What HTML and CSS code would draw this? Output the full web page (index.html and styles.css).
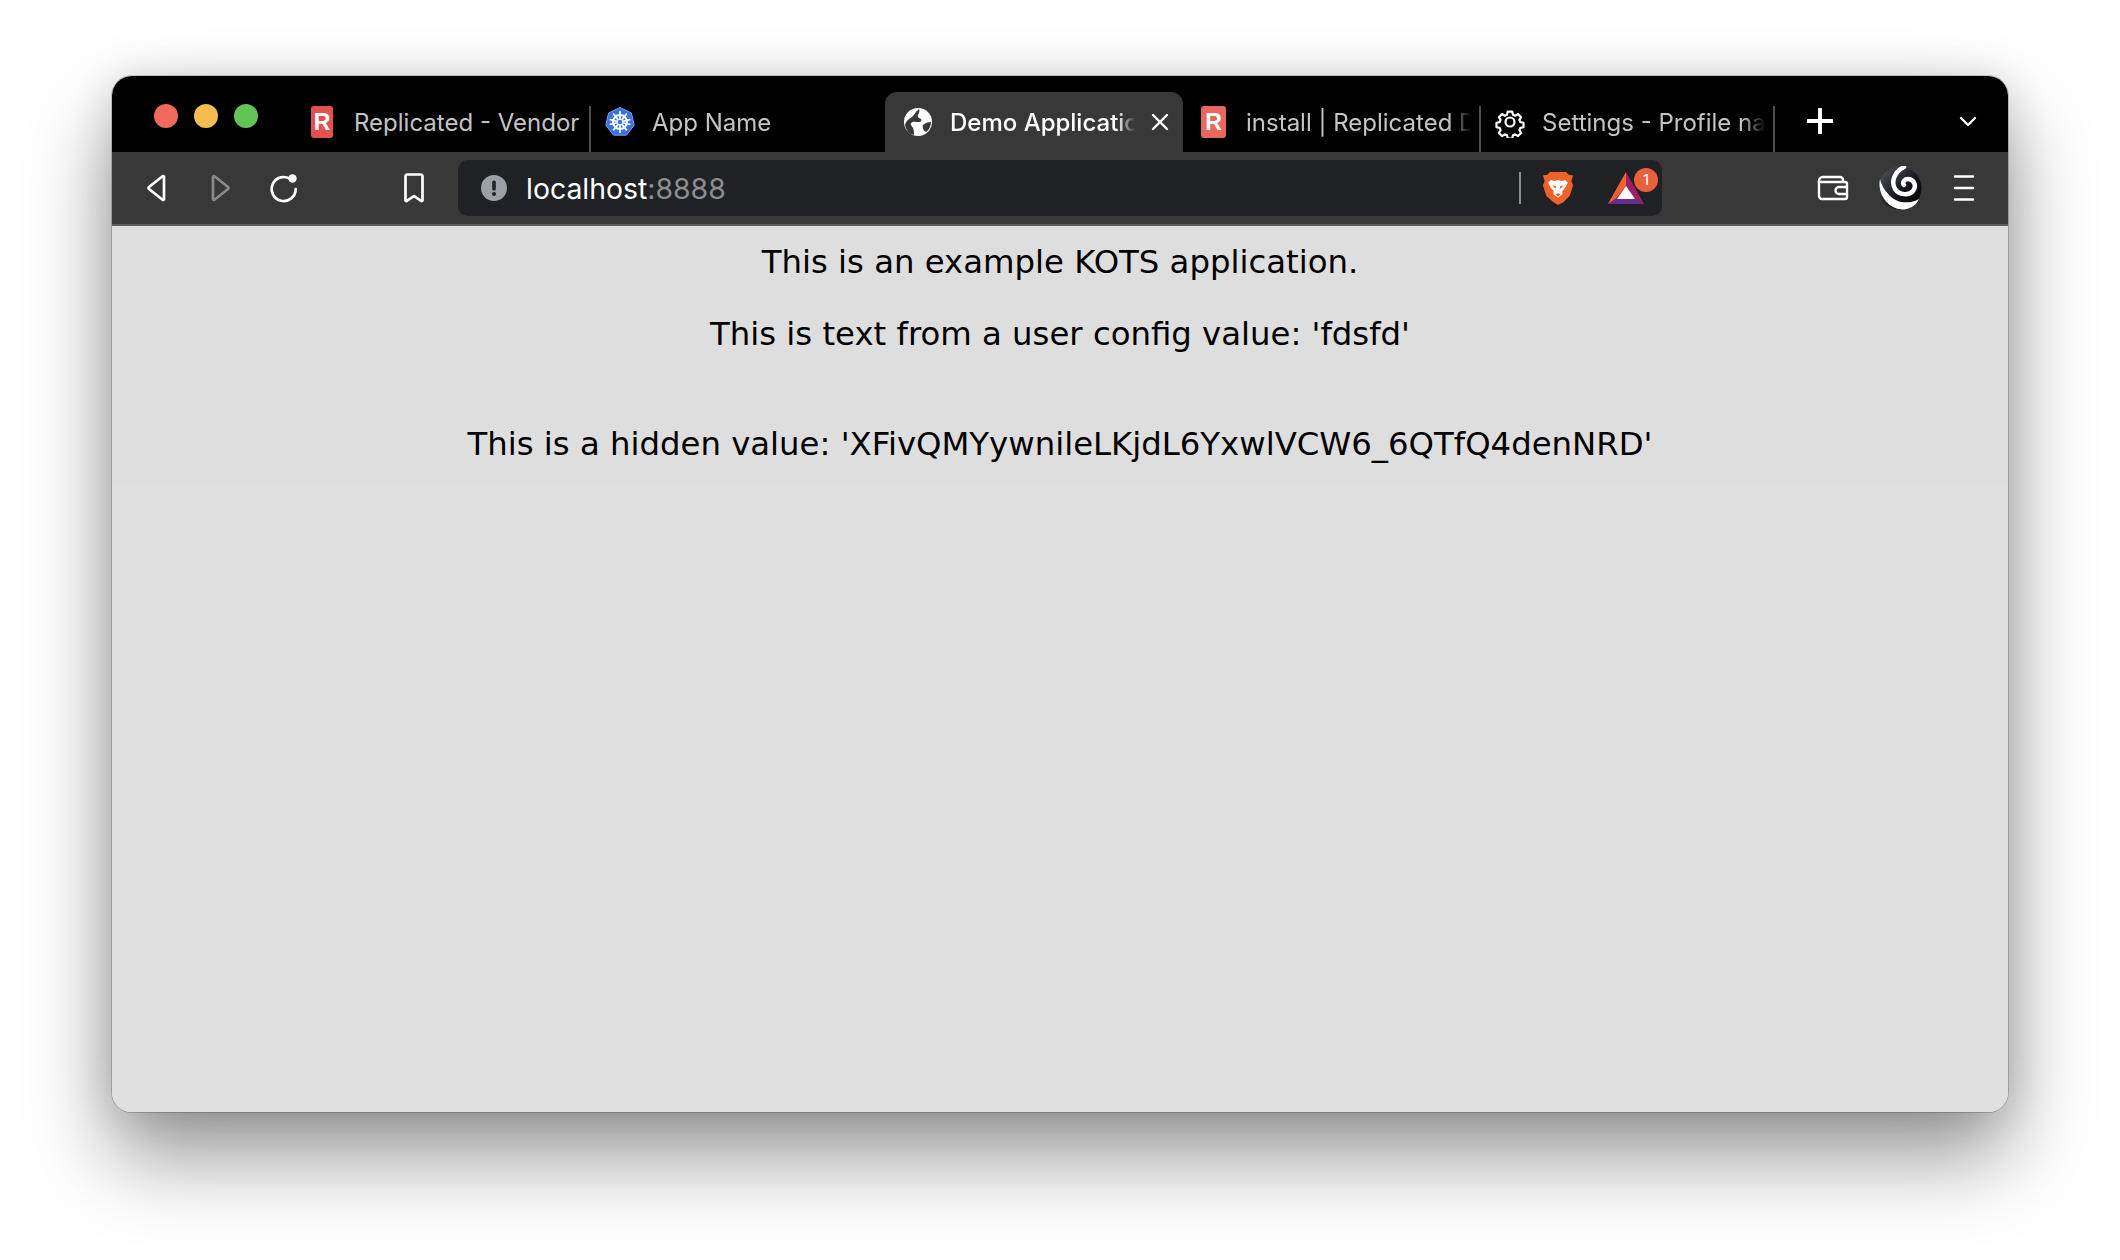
FILE: index.html
```html
<!DOCTYPE html>
<html lang="en">
<head>
	<meta charset="utf-8">
	<title>Demo Application</title>
	<link rel="stylesheet" href="styles.css">
</head>
<body>
	<div class="window">
		<div class="tabstrip">
			<div class="traffic">
				<span class="light red"></span>
				<span class="light yellow"></span>
				<span class="light green"></span>
			</div>
			<div class="tab">
				<span class="r-icon r-icon-dark">R</span>
				<span class="tab-title tab-title-full">Replicated - Vendor</span>
			</div>
			<div class="tab tab-sep">
				<svg class="fav" viewBox="0 0 32 32">
					<path d="M16 1.5l11.4 5.5 2.8 12.3-7.9 9.9H9.7L1.8 19.3 4.6 7z" fill="#3970e4" stroke="#7ea0ec" stroke-width="1"/>
					<g fill="none" stroke="#fff">
						<circle cx="16" cy="16" r="7" stroke-width="2"/>
						<path d="M16 5v22M5.5 13.5l21 5M26.5 13.5l-21 5M9.2 7.6l13.6 16.8M22.8 7.6L9.2 24.400" stroke-width="1.7"/>
					</g>
					<circle cx="16" cy="16" r="2.200" fill="#3970e4"/>
				</svg>
				<span class="tab-title">App Name</span>
			</div>
			<div class="tab tab-active">
				<svg class="fav" viewBox="0 0 32 32">
					<circle cx="16" cy="16" r="14" fill="#fff"/>
					<path d="M3 19c1-5 5-6 8-9 2-2 3-5 6-7 1 2 0 4-1 6-1 2 1 3 3 4 1 1 0 3-2 3-3 0-6-1-8 1-1 2 1 3 2 5 1 2 1 4 1 7-4-1-7-2-9-10zM21 19c2-2 5-3 8-3 0 4-2 8-5 10-2-1-4-4-3-7z" fill="#383838"/>
				</svg>
				<span class="tab-title">Demo Application</span>
				<svg class="close" viewBox="0 0 18 18"><path d="M2 2l14 14M16 2L2 16" stroke="#fff" stroke-width="2.400" stroke-linecap="round"/></svg>
			</div>
			<div class="tab">
				<span class="r-icon">R</span>
				<span class="tab-title">install | Replicated Docs</span>
			</div>
			<div class="tab tab-sep tab-end">
				<svg class="fav" viewBox="0 0 32 32">
					<path d="M13.200 3h5.600l.9 4 2.800 1.200 3.500-2.200 3.900 4-2.200 3.400 1.200 2.800 4 .8v5.600l-4 .8-1.200 2.800 2.200 3.500-3.900 3.900-3.500-2.200-2.800 1.200-.9 4h-5.600l-.9-4-2.800-1.200-3.500 2.200-3.900-3.900 2.200-3.500-1.200-2.800-4-.8v-5.600l4-.8 1.200-2.800-2.200-3.400 3.900-4 3.500 2.200 2.800-1.200z" transform="translate(3.200 3.200) scale(.8)" fill="none" stroke="#fff" stroke-width="2.700" stroke-linejoin="round"/>
					<circle cx="16" cy="16" r="4.500" fill="none" stroke="#fff" stroke-width="2.200"/>
				</svg>
				<span class="tab-title">Settings - Profile name</span>
			</div>
			<svg class="plus" viewBox="0 0 24 24"><path d="M12 1v22M1 12h22" stroke="#fff" stroke-width="3.600" stroke-linecap="round"/></svg>
			<svg class="chevron" viewBox="0 0 18 12"><path d="M2 2l7 7 7-7" fill="none" stroke="#fff" stroke-width="2.400" stroke-linecap="round" stroke-linejoin="round"/></svg>
		</div>

		<div class="toolbar">
			<svg class="btn" viewBox="0 0 40 40"><path d="M28 9v22a.9.900 0 0 1-1.500.700L13 21a1.300 1.300 0 0 1 0-2L26.500 8.300A.9.900 0 0 1 28 9z" transform="translate(-1 0)" fill="none" stroke="#fff" stroke-width="2.700" stroke-linejoin="round"/></svg>
			<svg class="btn" viewBox="0 0 40 40"><path d="M13 9v22a.9.900 0 0 0 1.500.700L28 21a1.300 1.300 0 0 0 0-2L14.500 8.300A.9.900 0 0 0 13 9z" fill="none" stroke="#8a8a8a" stroke-width="2.700" stroke-linejoin="round"/></svg>
			<svg class="btn btn-reload" viewBox="0 0 40 40"><path d="M27 11.500A12 12 0 1 0 31.700 21" fill="none" stroke="#fff" stroke-width="2.700" stroke-linecap="round"/><circle cx="28.500" cy="10.500" r="4.200" fill="#fff"/></svg>
			<svg class="btn btn-mark" viewBox="0 0 40 40"><path d="M11.500 8.500a2 2 0 0 1 2-2h13a2 2 0 0 1 2 2v24l-1 .6L20 28l-7.500 5.100-1-.6z" fill="none" stroke="#fff" stroke-width="2.700" stroke-linejoin="round"/></svg>

			<div class="address">
				<svg class="info" viewBox="0 0 26 26">
					<circle cx="13" cy="13" r="13" fill="#9aa0a6"/>
					<rect x="11.200" y="5.500" width="3.600" height="10" rx="1.500" fill="#202124"/>
					<circle cx="13" cy="19" r="2" fill="#202124"/>
				</svg>
				<div class="url">localhost<span class="port">:8888</span></div>
				<span class="addr-sep"></span>
				<svg class="brave" viewBox="0 0 36 40">
					<path d="M9 2h18l3 3 5 1-2 6 2 5-4 12-7 7-6 3-5-3-8-7L1 17l2-5-2-6 5-1z" fill="#f1622b"/>
					<path d="M10 11l4 1 4-1 4 1 4-1 3 3-3 6-3 3v4l-5 4-5-4v-4l-3-3-3-6z" fill="#fff"/>
					<path d="M12 17l4 1-1 3zM24 17l-4 1 1 3zM15 27l3-1 3 1-3 2.500z" fill="#f1622b"/>
				</svg>
				<div class="bat">
					<svg class="bat-logo" viewBox="0 0 36 32">
						<path d="M18 0l18 32H0z" fill="#9e1f63"/>
						<path d="M18 0v14L8 26 0 32z" fill="#f1622b"/>
						<path d="M0 32l8-5h20l8 5z" fill="#662d91"/>
						<path d="M18 14l9 13H9z" fill="#fff"/>
					</svg>
					<span class="badge">1</span>
				</div>
			</div>

			<svg class="btn btn-wallet" viewBox="0 0 40 40">
				<path d="M8 15v-2a4 4 0 0 1 4-4h17a3 3 0 0 1 3 3v2" fill="none" stroke="#fff" stroke-width="2.400"/>
				<path d="M8 13v15a3 3 0 0 0 3 3h23a2 2 0 0 0 2-2V16a2 2 0 0 0-2-2H10" fill="none" stroke="#fff" stroke-width="2.400" stroke-linecap="round"/>
				<path d="M36 19h-8a3.500 3.500 0 0 0 0 7h8" fill="none" stroke="#fff" stroke-width="2.400"/>
			</svg>
			<svg class="avatar" viewBox="0 0 44 44">
				<defs>
					<linearGradient id="ball" x1=".1" y1=".1" x2=".9" y2=".9">
						<stop offset="0" stop-color="#4c4f58"/>
						<stop offset=".55" stop-color="#17181c"/>
						<stop offset="1" stop-color="#040405"/>
					</linearGradient>
				</defs>
				<circle cx="22" cy="22" r="21.500" fill="url(#ball)"/>
				<path d="M2 13C-1 28 10 44 26 43.500 33 43 39 38 41 33 32 38 19 38 11 29 6 24 3 18 2 13z" fill="#fff"/>
				<path d="M26 1C16 6 13 16 17 23c4 6 14 7 18 2 4-5 1-12-5-12-4 0-6 4-4 6" fill="none" stroke="#fff" stroke-width="4.500" stroke-linecap="round"/>
			</svg>
			<svg class="btn btn-menu" viewBox="0 0 40 40"><path d="M11 8.500h18M11 20h18M11 31.500h18" stroke="#fff" stroke-width="2.600" stroke-linecap="round"/></svg>
		</div>

		<div class="page">
			<div class="page-top">
				<p>This is an example KOTS application.</p>
				<p class="line-two">This is text from a user config value: 'fdsfd'</p>
				<p class="line-three">This is a hidden value: 'XFivQMYywnileLKjdL6YxwlVCW6_6QTfQ4denNRD'</p>
			</div>
		</div>
	</div>
</body>
</html>
```

FILE: styles.css
```css
*{
	margin: 0;
	padding: 0;
	box-sizing: border-box;
}
html,body{
	height: 100%;
}
body{
	background-color: #fff;
	padding: 76px 112px 148px;
	font-family: "Inter", "Liberation Sans", sans-serif;
	overflow: hidden;
}
.window{
	height: 1036px;
	border-radius: 20px;
	overflow: hidden;
	display: flex;
	flex-direction: column;
	box-shadow: 0 0 0 1px rgba(0,0,0,.18), 0 44px 84px rgba(0,0,0,.42), 0 0 40px rgba(0,0,0,.12);
}

/* tabs */
.tabstrip{
	height: 76px;
	flex: none;
	background-color: #000;
	display: flex;
	align-items: flex-end;
}
.traffic{
	width: 181px;
	height: 78px;
	margin-bottom: -2px;
	padding: 27px 0 25px 42px;
	display: flex;
	align-items: center;
	gap: 16px;
	flex: none;
	align-self: flex-start;
}
.light{
	width: 24px;
	height: 24px;
	border-radius: 50%;
}
.red{ background-color: #ee6a5f; }
.yellow{ background-color: #f5bd4f; }
.green{ background-color: #61c454; }
.tab{
	width: 296px;
	height: 46px;
	flex: none;
	display: flex;
	align-items: center;
	padding: 0 8px 14px 18px;
	color: #c4c4c4;
	font-size: 24px;
	gap: 20px;
}
.tab-sep{
	border-left: 2px solid #4e4e4e;
	padding-left: 13px;
	gap: 16px;
}
.tab-end{
	border-right: 2px solid #4e4e4e;
}
.tab-active{
	width: 298px;
	height: 60px;
	background-color: #383838;
	border-radius: 12px 12px 0 0;
	color: #fff;
	font-weight: 500;
	padding: 0 14px 0 17px;
	gap: 16px;
}
.tab-title{
	flex: 1;
	white-space: nowrap;
	overflow: hidden;
	-webkit-mask-image: linear-gradient(to right, #000 90%, transparent 100%);
	mask-image: linear-gradient(to right, #000 90%, transparent 100%);
}
.tab-title-full{
	overflow: visible;
	-webkit-mask-image: none;
	mask-image: none;
}
.r-icon{
	width: 25px;
	height: 32px;
	flex: none;
	border-radius: 3px;
	background-color: #e8685f;
	color: #fff;
	font-family: "Liberation Sans", sans-serif;
	font-weight: bold;
	font-size: 23px;
	line-height: 32px;
	text-align: center;
}
.r-icon-dark{
	width: 22px;
	margin-right: 1px;
	background-color: #e25050;
}
.fav{
	width: 32px;
	height: 32px;
	flex: none;
}
.close{
	width: 18px;
	height: 18px;
	flex: none;
}
.plus{
	width: 26px;
	height: 26px;
	flex: none;
	margin: 0 0 18px 32px;
}
.chevron{
	width: 18px;
	height: 12px;
	flex: none;
	margin: 0 0 24px 126px;
}

/* toolbar */
.toolbar{
	height: 74px;
	flex: none;
	background-color: #383838;
	border-bottom: 2px solid #5c5c5c;
	display: flex;
	align-items: center;
	padding-left: 25px;
	gap: 23px;
}
.btn{
	width: 40px;
	height: 40px;
	flex: none;
}
.btn-reload{
	margin-left: 1px;
}
.btn-mark{
	margin-left: 67px;
}
.address{
	width: 1204px;
	height: 56px;
	flex: none;
	margin: 8px 0 0 1px;
	align-self: flex-start;
	background-color: #202124;
	border-radius: 10px;
	display: flex;
	align-items: center;
	padding-left: 23px;
}
.info{
	width: 26px;
	height: 26px;
	flex: none;
}
.url{
	flex: 1;
	margin-left: 19px;
	color: #fff;
	font-size: 28.4px;
}
.port{
	color: #8b8d90;
}
.addr-sep{
	width: 2px;
	height: 32px;
	background-color: #8f8f8f;
	flex: none;
}
.brave{
	width: 32px;
	height: 36px;
	flex: none;
	margin-left: 21px;
}
.bat{
	width: 36px;
	height: 32px;
	flex: none;
	margin: 0 18px 0 34px;
	position: relative;
}
.bat-logo{
	display: block;
	width: 36px;
	height: 32px;
}
.badge{
	position: absolute;
	left: 26px;
	top: -4px;
	width: 24px;
	height: 24px;
	border-radius: 50%;
	background-color: #e8603c;
	color: #fff;
	font-size: 15px;
	line-height: 24px;
	text-align: center;
}
.btn-wallet{
	margin-left: 126px;
}
.avatar{
	width: 44px;
	height: 44px;
	flex: none;
	margin-left: 4px;
}
.btn-menu{
	margin-left: -1px;
}

/* page */
.page{
	flex: 1;
	background-color: #e0e0e0;
}
.page-top{
	height: 257px;
	background-color: #dedede;
	padding-top: 17px;
	font-family: "DejaVu Sans", sans-serif;
	font-size: 32.35px;
	color: #000;
	text-align: center;
}
.line-two{
	margin-top: 34px;
}
.line-three{
	margin-top: 72px;
}
```
